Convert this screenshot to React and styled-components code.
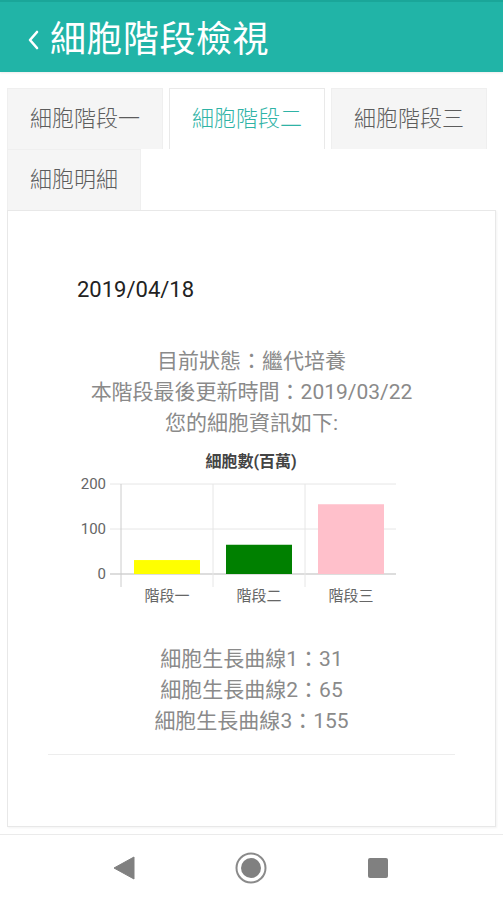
import styled, { createGlobalStyle } from 'styled-components';

const GlobalStyle = createGlobalStyle`
	html, body {
		margin: 0;
		padding: 0;
		background: #ffffff;
	}
	body {
		font-family: Roboto, "Noto Sans CJK TC", "Noto Sans", sans-serif;
	}
	* {
		box-sizing: border-box;
	}
`;

const Screen = styled.div`
	display: flex;
	flex-direction: column;
	width: 503px;
	height: 900px;
	overflow: hidden;
	background: #ffffff;
`;

const Header = styled.header`
	display: flex;
	align-items: center;
	gap: 11px;
	height: 72px;
	padding: 6px 0 0 27px;
	background: #21b4a7;
	border-top: 2px solid #1aa699;
	box-shadow: 0 1px 2px rgba(0, 0, 0, 0.08);
	color: #ffffff;
`;

const Title = styled.h1`
	margin: 0;
	font-size: 36px;
	font-weight: 400;
	letter-spacing: 0.5px;
	line-height: 1;
`;

const Tabs = styled.nav`
	display: flex;
	flex-wrap: wrap;
	column-gap: 6px;
	padding: 16px 7px 0;
`;

const Tab = styled.button`
	height: 61px;
	padding: 0 22px;
	border: 1px solid ${p => (p.$active ? '#e9e9e9' : '#efefef')};
	border-bottom: none;
	background: ${p => (p.$active ? '#ffffff' : '#f5f5f5')};
	color: ${p => (p.$active ? '#2fb3a6' : '#5c5c5c')};
	font-family: inherit;
	font-size: 22px;
	font-weight: 300;
	line-height: 1;
	cursor: pointer;
`;

const Panel = styled.section`
	flex: 1;
	display: flex;
	flex-direction: column;
	margin: 0 7px 7px;
	padding-top: 64px;
	border: 1px solid #e8e8e8;
	box-shadow: 1px 1px 2px rgba(0, 0, 0, 0.05);
`;

const DateLine = styled.div`
	padding-left: 69px;
	font-size: 22px;
	line-height: 30px;
	color: #222222;
`;

const InfoBlock = styled.div`
	display: flex;
	flex-direction: column;
	align-items: center;
	margin-top: ${p => p.$top || '0'};
	font-size: 21px;
	line-height: 31px;
	color: #8a8a8a;
`;

const ChartWrap = styled.div`
	display: flex;
	justify-content: center;
	margin: 9px 0 32px;

	text {
		font-family: Roboto, "Noto Sans CJK TC", sans-serif;
	}
`;

const Divider = styled.hr`
	margin: 17px 40px 0;
	border: none;
	border-top: 1px solid #ededed;
`;

const NavBar = styled.footer`
	display: grid;
	grid-template-columns: repeat(3, 1fr);
	align-items: center;
	justify-items: center;
	height: 66px;
	padding: 0 62px 0 60px;
	border-top: 1px solid #ebebeb;
	background: #ffffff;
`;

const bars = [
	{ label: '階段一', value: 31, color: '#ffff00' },
	{ label: '階段二', value: 65, color: '#008000' },
	{ label: '階段三', value: 155, color: '#ffc0cb' },
];

function CellChart() {
	const left = 60;
	const band = 92;
	const top = 36;
	const bottom = 126;
	const scale = (bottom - top) / 200;

	return (
		<svg width="382" height="164" viewBox="0 0 382 164">
			<text x="190" y="19" textAnchor="middle" fontSize="16" fontWeight="700" fill="#444">
				細胞數(百萬)
			</text>
			{[200, 100, 0].map(v => {
				const y = bottom - v * scale;
				return (
					<g key={v}>
						<line x1="49" x2="335" y1={y} y2={y} stroke={v === 0 ? '#bbb' : '#e6e6e6'} strokeWidth="1" />
						<text x="45" y={y + 5} textAnchor="end" fontSize="15" fill="#666">
							{v}
						</text>
					</g>
				);
			})}
			{[0, 1, 2].map(i => (
				<line
					key={i}
					x1={left + i * band}
					x2={left + i * band}
					y1={top}
					y2="139"
					stroke={i === 0 ? '#ccc' : '#e6e6e6'}
					strokeWidth="1"
				/>
			))}
			{bars.map((b, i) => {
				const h = b.value * scale;
				const cx = left + i * band + band / 2;
				return (
					<g key={b.label}>
						<rect x={cx - 33} y={bottom - h} width="66" height={h} fill={b.color} />
						<text x={cx} y="153" textAnchor="middle" fontSize="15" fill="#666">
							{b.label}
						</text>
					</g>
				);
			})}
		</svg>
	);
}

function App() {
	return (
		<Screen>
			<GlobalStyle />
			<Header>
				<svg width="12" height="20" viewBox="0 0 12 20">
					<path d="M10 2 L3 10 L10 18" fill="none" stroke="#fff" strokeWidth="2.6" strokeLinecap="round" strokeLinejoin="round" />
				</svg>
				<Title>細胞階段檢視</Title>
			</Header>

			<Tabs>
				<Tab>細胞階段一</Tab>
				<Tab $active>細胞階段二</Tab>
				<Tab>細胞階段三</Tab>
				<Tab>細胞明細</Tab>
			</Tabs>

			<Panel>
				<DateLine>2019/04/18</DateLine>

				<InfoBlock $top="41px">
					<span>目前狀態：繼代培養</span>
					<span>本階段最後更新時間：2019/03/22</span>
					<span>您的細胞資訊如下:</span>
				</InfoBlock>

				<ChartWrap>
					<CellChart />
				</ChartWrap>

				<InfoBlock>
					{bars.map((b, i) => (
						<span key={b.label}>
							細胞生長曲線{i + 1}：{b.value}
						</span>
					))}
				</InfoBlock>

				<Divider />
			</Panel>

			<NavBar>
				<svg width="22" height="24" viewBox="0 0 22 24">
					<path d="M1 12 L21 1 L21 23 Z" fill="#808080" stroke="#808080" strokeWidth="1" strokeLinejoin="round" />
				</svg>
				<svg width="32" height="32" viewBox="0 0 32 32">
					<circle cx="16" cy="16" r="14.5" fill="none" stroke="#8a8a8a" strokeWidth="2" />
					<circle cx="16" cy="16" r="10" fill="#808080" />
				</svg>
				<svg width="22" height="22" viewBox="0 0 22 22">
					<rect x="1" y="1" width="20" height="20" rx="2" fill="#808080" />
				</svg>
			</NavBar>
		</Screen>
	);
}

export default App;
